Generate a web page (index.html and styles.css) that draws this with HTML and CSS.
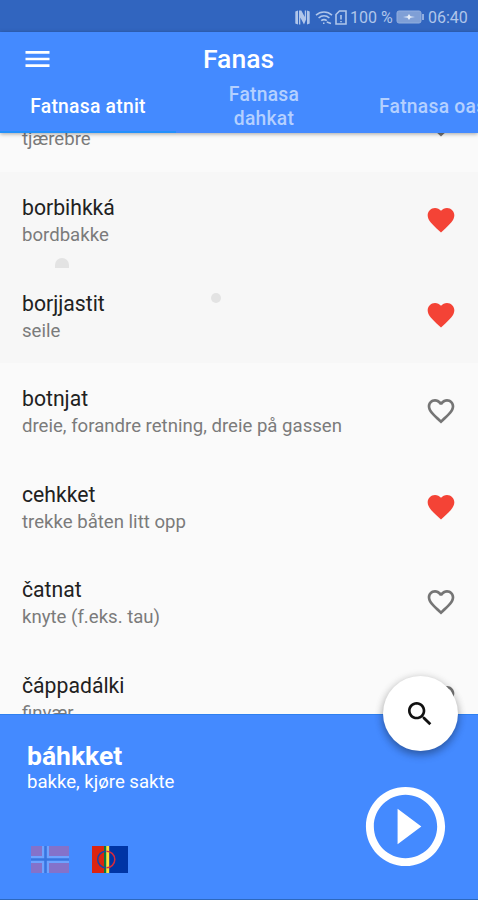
FILE: index.html
```html
<!DOCTYPE html>
<html lang="se">
<head>
<meta charset="utf-8">
<title>Fanas</title>
<link rel="stylesheet" href="styles.css">
</head>
<body>
<svg class="defs" width="0" height="0">
  <symbol id="heart" viewBox="0 0 24 24"><path d="M12 21.35l-1.45-1.32C5.4 15.36 2 12.28 2 8.5 2 5.42 4.42 3 7.5 3c1.74 0 3.41.81 4.5 2.09C13.09 3.81 14.76 3 16.5 3 19.58 3 22 5.42 22 8.5c0 3.78-3.4 6.86-8.55 11.54L12 21.35z"/></symbol>
  <symbol id="heart-outline" viewBox="0 0 24 24"><path d="M16.5 3c-1.74 0-3.41.81-4.5 2.09C10.91 3.81 9.24 3 7.5 3 4.42 3 2 5.42 2 8.5c0 3.78 3.4 6.86 8.55 11.54L12 21.35l1.45-1.32C18.6 15.36 22 12.28 22 8.5 22 5.42 19.58 3 16.5 3zm-4.4 15.55l-.1.1-.1-.1C7.14 14.24 4 11.39 4 8.5 4 6.5 5.5 5 7.5 5c1.54 0 3.04.99 3.57 2.36h1.87C13.46 5.99 14.96 5 16.5 5c2 0 3.5 1.5 3.5 3.5 0 2.89-3.14 5.74-7.9 10.05z"/></symbol>
</svg>
<div class="app">
  <div class="status">
    <svg class="nfc" viewBox="0 0 15 15"><path d="M.3 1.500L3 .5v14l-2.700-1zM12 .5l2.700 1v12l-2.700 1z"/><path d="M4 .5h2.300L9.800 7V.5h1.300v9L9 14.500 5.300 7.500v7H4z"/></svg>
    <svg class="wifi" viewBox="0 0 18 15"><path d="M1 5.2c4.6-4.2 11.4-4.2 16 0M3.6 8c3.2-2.8 7.6-2.8 10.8 0M6.2 10.7c1.8-1.4 3.800-1.400 5.600 0"/><path d="M8 13.200h1.500M11.800 12l4.200 1.500"/></svg>
    <svg class="sim" viewBox="0 0 12 15"><path d="M1 4.5L4.5 1H11v13H1zM6 5v4.5M6 11v1.3"/></svg>
    <span class="percent">100 %</span>
    <svg class="battery" viewBox="0 0 28 14"><rect class="cell" x="1" y="1" width="24" height="12" rx="2"/><path class="tip" d="M26 4h2v6h-2z"/><path class="bolt" d="M7 7l4.500-.8L13 4l1.500 2.200L19 7l-4.500.8L13 10l-1.500-2.200z"/></svg>
    <span class="time">06:40</span>
  </div>
  <header class="header">
    <div class="bar">
      <svg class="menu" viewBox="0 0 24 24"><path d="M3 18h18v-2H3v2zm0-5h18v-2H3v2zm0-7v2h18V6H3z"/></svg>
      <h1>Fanas</h1>
    </div>
    <nav class="tabs">
      <div class="tab active">Fatnasa atnit</div>
      <div class="tab">Fatnasa<br>dahkat</div>
      <div class="tab last">Fatnasa oasit</div>
    </nav>
  </header>
  <main class="list">
    <div class="rows">
      <div class="row"><div class="entry"><div class="word">bihkkavuoddji</div><div class="sub">tjærebre</div></div><svg class="fav"><use href="#heart-outline"/></svg></div>
      <div class="row pressed"><div class="entry"><div class="word">borbihkká</div><div class="sub">bordbakke</div></div><svg class="fav on"><use href="#heart"/></svg><i class="spot half"></i></div>
      <div class="row pressed"><div class="entry"><div class="word">borjjastit</div><div class="sub">seile</div></div><svg class="fav on"><use href="#heart"/></svg><i class="spot dot"></i></div>
      <div class="row"><div class="entry"><div class="word">botnjat</div><div class="sub">dreie, forandre retning, dreie på gassen</div></div><svg class="fav"><use href="#heart-outline"/></svg></div>
      <div class="row"><div class="entry"><div class="word">cehkket</div><div class="sub">trekke båten litt opp</div></div><svg class="fav on"><use href="#heart"/></svg></div>
      <div class="row"><div class="entry"><div class="word">čatnat</div><div class="sub">knyte (f.eks. tau)</div></div><svg class="fav"><use href="#heart-outline"/></svg></div>
      <div class="row"><div class="entry"><div class="word">čáppadálki</div><div class="sub">finvær</div></div><svg class="fav"><use href="#heart-outline"/></svg></div>
    </div>
  </main>
  <footer class="player">
    <div class="info">
      <div class="current">báhkket</div>
      <div class="meaning">bakke, kjøre sakte</div>
      <div class="flags">
        <svg class="norway" viewBox="0 0 38 27"><path fill="#ba5f9f" d="M0 0h38v27H0z"/><path stroke="#8fb9ff" stroke-width="7" d="M14.5 0v27M0 13.5h38"/><path stroke="#2e65c8" stroke-width="2.6" d="M14.5 0v27M0 13.5h38"/></svg>
        <svg class="sami" viewBox="0 0 36 27"><path fill="#dc2410" d="M0 0h12v27H0z"/><path fill="#0035a5" d="M17 0h19v27H17z"/><path fill="#087a3c" d="M12 0h2.5v27H12z"/><path fill="#ffe036" d="M14.3 0h2.9v27h-2.9z"/><path fill="none" stroke="#1744a8" stroke-width="1.5" d="M14 5.2a8.3 8.3 0 0 0 0 16.6"/><path fill="none" stroke="#d52b3f" stroke-width="1.5" d="M14.5 5.2a8.3 8.3 0 0 1 0 16.6"/></svg>
      </div>
    </div>
    <svg class="play" viewBox="0 0 24 24"><path d="M10 16.5l6-4.5-6-4.5v9zM12 2C6.48 2 2 6.48 2 12s4.480 10 10 10 10-4.480 10-10S17.520 2 12 2zm0 18c-4.410 0-8-3.590-8-8s3.590-8 8-8 8 3.590 8 8-3.590 8-8 8z"/></svg>
    <div class="fab">
      <svg class="search" viewBox="0 0 24 24"><path d="M15.5 14h-.79l-.28-.27C15.41 12.59 16 11.11 16 9.5 16 5.91 13.09 3 9.5 3S3 5.91 3 9.5 5.91 16 9.5 16c1.61 0 3.09-.59 4.23-1.57l.27.28v.79l5 4.99L20.49 19l-4.99-5zm-6 0C7.01 14 5 11.99 5 9.5S7.01 5 9.5 5 14 7.01 14 9.5 11.99 14 9.5 14z"/></svg>
    </div>
  </footer>
</div>
</body>
</html>
```
FILE: styles.css
```css
* { box-sizing: border-box; }
body {
  margin: 0;
  font-family: Roboto, "Noto Sans", sans-serif;
  background: #fafafa;
}
.defs { position: absolute; }
svg { display: block; flex: none; }
.app {
  width: 478px;
  height: 900px;
  display: flex;
  flex-direction: column;
  overflow: hidden;
}
.status {
  flex: none;
  height: 32px;
  padding: 2px 10px 0 0;
  display: flex;
  align-items: center;
  justify-content: flex-end;
  background: #3165bf;
  color: #b0c6ea;
  font-size: 16px;
}
.status svg { fill: none; stroke: #b0c6ea; stroke-width: 1.6; }
.status .nfc { width: 15px; height: 15px; fill: #b0c6ea; stroke: none; margin-right: 5px; }
.status .wifi { width: 18px; height: 15px; margin-right: 2px; }
.status .sim { width: 12px; height: 15px; margin-right: 3px; }
.percent { width: 43px; white-space: nowrap; }
.status .battery { width: 28px; height: 14px; margin: 0 4px 0 3px; }
.battery .cell { fill: #7f9fd6; stroke: #91aedf; stroke-width: 1; }
.battery .tip { fill: #91aedf; stroke: none; }
.battery .bolt { fill: #e3ecfa; stroke: none; }
.time { width: 40px; white-space: nowrap; }
.header {
  flex: none;
  height: 101px;
  background: #448aff;
  color: #fff;
  position: relative;
  z-index: 1;
  box-shadow: 0 1px 4px rgba(0, 0, 0, .35);
}
.bar {
  height: 48px;
  display: grid;
  grid-template-columns: 1fr auto 1fr;
  align-items: center;
  padding: 6px 0 0 21px;
}
.bar h1 { margin: 0 0 0 -22px; font-size: 26.5px; font-weight: 500; line-height: 32px; }
.menu { width: 33px; height: 32px; fill: #fff; }
.tabs {
  height: 53px;
  display: flex;
  width: 560px;
  font-size: 19.3px;
  font-weight: 500;
  letter-spacing: .25px;
  line-height: 24px;
  text-align: center;
}
.tab {
  width: 176px;
  display: flex;
  align-items: center;
  justify-content: center;
  color: #b4d0ff;
  white-space: nowrap;
}
.tab.active { color: #fff; border-bottom: 2px solid #2490fb; padding-top: 2px; }
.tab.last { justify-content: flex-start; padding-left: 27px; }
.list { flex: 1; min-height: 0; overflow: hidden; }
.rows { margin-top: -56.5px; }
.row {
  height: 95.6px;
  padding: 0 21px 0 22px;
  display: flex;
  align-items: center;
  justify-content: space-between;
  position: relative;
}
.pressed { background: #f7f7f7; }
.entry { padding-top: 3.4px; }
.word { font-size: 21.2px; line-height: 28px; color: #212121; }
.sub { font-size: 18.6px; line-height: 27px; color: #7b7b7b; }
.fav { width: 32px; height: 32px; fill: #757575; }
.fav.on { fill: #f44336; }
.spot { position: absolute; background: #e3e3e3; }
.half { left: 55px; bottom: 0; width: 14px; height: 10px; border-radius: 7px 7px 0 0; }
.dot { left: 211px; top: 25px; width: 10px; height: 10px; border-radius: 50%; }
.player {
  flex: none;
  height: 186px;
  padding: 26px 25px 0 27px;
  display: flex;
  justify-content: space-between;
  position: relative;
  background: #448aff;
  border-top: 1px solid #2f80f0;
  border-bottom: 1px solid #2d68bd;
  color: #fff;
}
.current { font-size: 26.5px; font-weight: 700; line-height: 30px; }
.meaning { font-size: 18.6px; line-height: 23px; }
.flags { display: flex; gap: 23px; margin: 52px 0 0 4px; }
.norway { width: 38px; height: 27px; opacity: .55; }
.sami { width: 36px; height: 27px; }
.play { width: 95px; height: 95px; margin: 38px 0 0; fill: #fff; }
.fab {
  position: absolute;
  left: 383px;
  top: -39px;
  width: 75px;
  height: 75px;
  border-radius: 50%;
  background: #fff;
  box-shadow: 0 4px 8px rgba(0, 0, 0, .3), 0 1px 10px rgba(0, 0, 0, .12);
  display: flex;
  align-items: center;
  justify-content: center;
}
.search { width: 32px; height: 32px; fill: #111; margin: 0 2px 0 0; }
```
